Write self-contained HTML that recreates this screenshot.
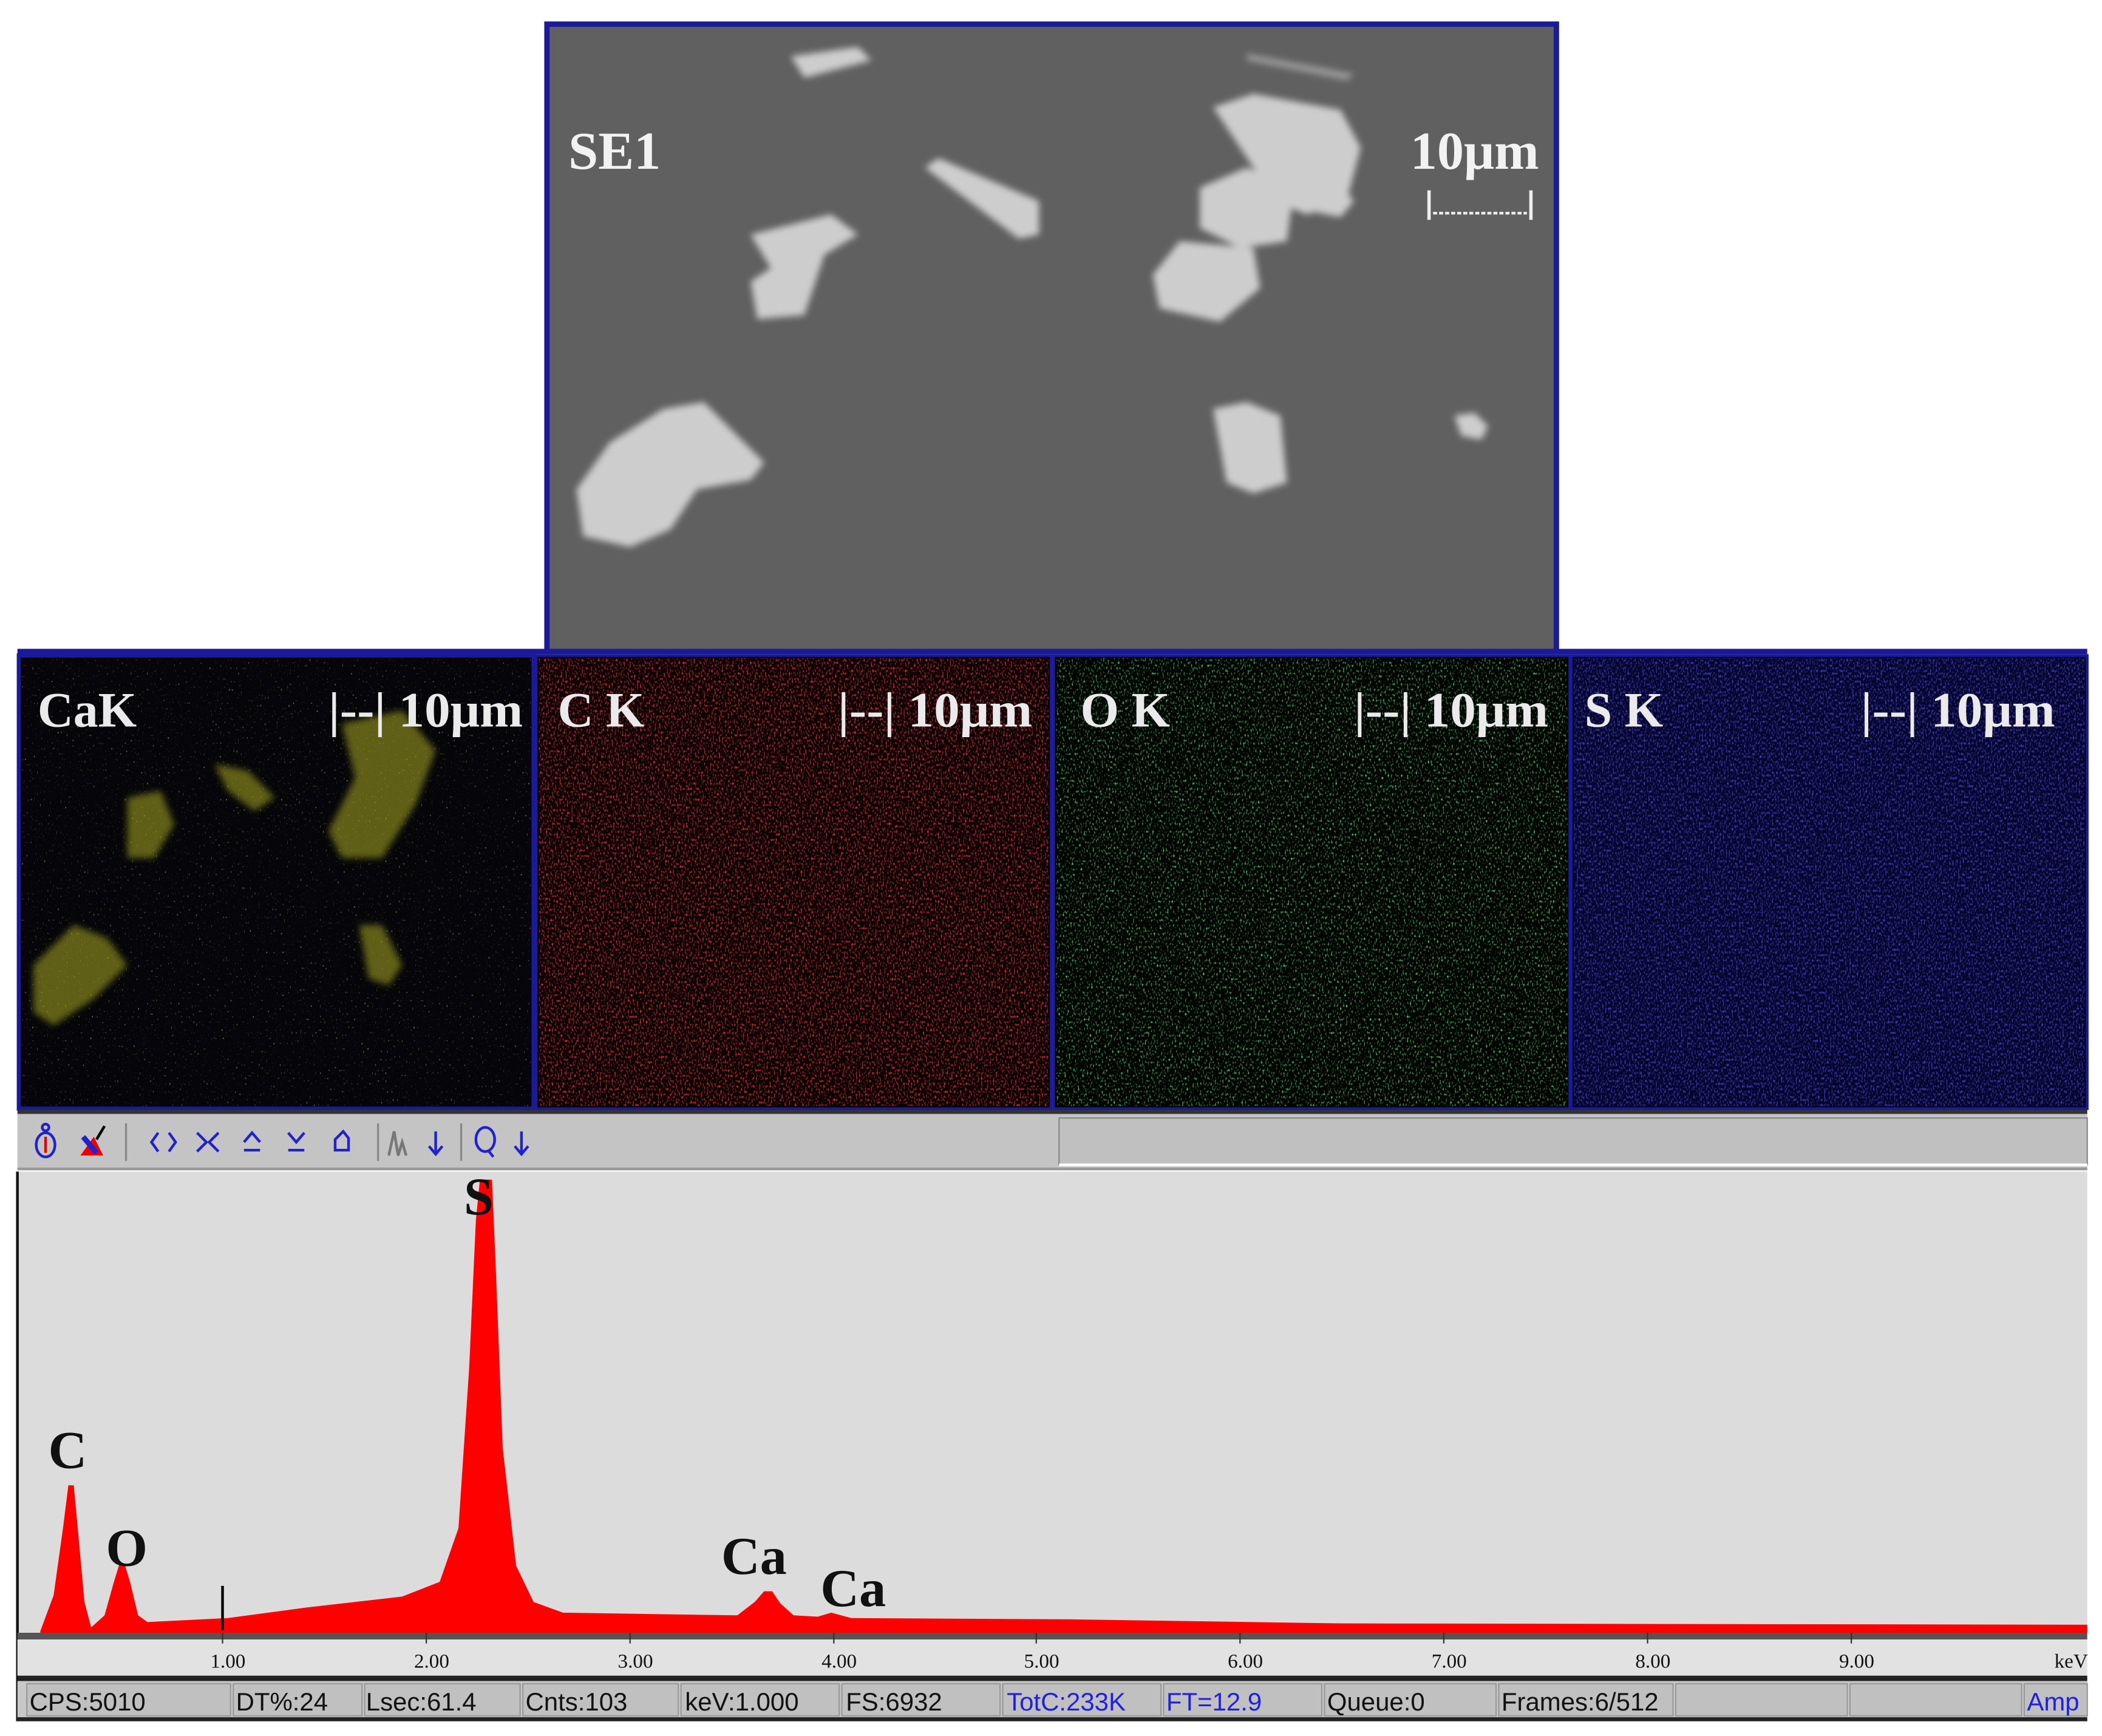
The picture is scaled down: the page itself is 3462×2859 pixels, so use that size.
<!DOCTYPE html>
<html><head><meta charset="utf-8"><style>
html,body{margin:0;padding:0;background:#fff;}
svg{display:block;}
</style></head><body>
<svg width="3462" height="2859" viewBox="0 0 1568 1295" preserveAspectRatio="none" xmlns="http://www.w3.org/2000/svg">
<defs>
<filter id="nR" x="0" y="0" width="100%" height="100%"><feTurbulence type="fractalNoise" baseFrequency="0.9 0.5" numOctaves="1" seed="3"/><feColorMatrix type="matrix" values="0 0 0 0 0.7  0 0 0 0 0.04  0 0 0 0 0.04  3 0 0 0 -1.45"/></filter>
<filter id="nG" x="0" y="0" width="100%" height="100%"><feTurbulence type="fractalNoise" baseFrequency="0.9 0.5" numOctaves="1" seed="7"/><feColorMatrix type="matrix" values="0 0 0 0 0.1  0 0 0 0 0.6  0 0 0 0 0.15  4 0 0 0 -2.2"/></filter>
<filter id="nB" x="0" y="0" width="100%" height="100%"><feTurbulence type="fractalNoise" baseFrequency="0.9 0.5" numOctaves="1" seed="11"/><feColorMatrix type="matrix" values="0 0 0 0 0.05  0 0 0 0 0.05  0 0 0 0 0.5  3 0 0 0 -1.4"/></filter>
<filter id="nY" x="0" y="0" width="100%" height="100%"><feTurbulence type="fractalNoise" baseFrequency="0.9 0.5" numOctaves="1" seed="5"/><feColorMatrix type="matrix" values="0 0 0 0 0.6  0 0 0 0 0.6  0 0 0 0 0.05  4 0 0 0 -2.7"/></filter>
<filter id="bl" x="-20%" y="-20%" width="140%" height="140%"><feGaussianBlur stdDeviation="2.5"/></filter>
</defs>

<!-- SEM image -->
<rect x="406" y="16" width="757" height="470" fill="#1a1a9a"/>
<rect x="410" y="20" width="749" height="464" fill="#606060"/>
<g fill="#cdcdcd" filter="url(#bl)">
<polygon points="590,42 640,35 650,45 600,58"/>
<polygon points="690,125 700,118 775,150 775,175 760,178"/>
<polygon points="560,175 620,160 640,175 615,190 600,235 565,238 560,210 575,200"/>
<polygon points="905,80 935,70 1000,82 1015,110 1005,148 975,160 950,150 935,125"/>
<polygon points="895,140 930,125 965,140 960,180 925,185 895,170"/>
<polygon points="860,205 880,180 935,185 940,215 910,240 865,230"/>
<polygon points="975,140 1000,138 1010,150 1000,162 980,158"/>
<polygon points="430,365 455,330 495,305 525,300 545,320 570,345 560,358 520,365 500,395 470,408 435,400"/>
<polygon points="905,305 930,300 955,310 960,360 935,368 915,360"/>
<polygon points="1085,310 1100,308 1110,318 1105,328 1090,325"/>
<polygon points="930,40 1010,55 1005,60 930,45" fill="#999"/>
</g>
<g font-family="Liberation Serif, serif" font-weight="bold" fill="#f2f2f2">
<text x="424" y="126" font-size="40">SE1</text>
<text x="1052" y="126" font-size="40">10μm</text>
</g>
<path d="M1066,142v22M1142,142v22" stroke="#eee" stroke-width="2.5" fill="none"/>
<path d="M1069,159h70" stroke="#eee" stroke-width="2" stroke-dasharray="3 1.5" fill="none"/>

<!-- map row -->
<rect x="13" y="484" width="1544" height="4" fill="#1a1a9a"/>
<rect x="13" y="488" width="1544" height="340" fill="#888"/>
<g>
<rect x="14" y="489" width="384" height="338" fill="#05050a" stroke="#1a1a9a" stroke-width="3"/>
<rect x="16" y="491" width="380" height="334" filter="url(#nY)"/>
<g fill="#aaaa20" opacity="0.55" filter="url(#bl)">
<polygon points="255,540 300,530 325,560 310,600 285,640 255,640 245,620 265,580"/>
<polygon points="160,570 185,575 205,595 190,605 170,590"/>
<polygon points="95,595 120,590 130,615 115,640 95,640"/>
<polygon points="25,720 55,690 80,700 95,720 70,745 40,765 25,755"/>
<polygon points="268,690 285,690 300,720 290,735 275,730"/>
</g>
<rect x="400" y="489" width="384" height="338" fill="#080000" stroke="#1a1a9a" stroke-width="2"/>
<rect x="402" y="491" width="380" height="334" filter="url(#nR)"/>
<rect x="786" y="489" width="385" height="338" fill="#000500" stroke="#1a1a9a" stroke-width="2"/>
<rect x="788" y="491" width="381" height="334" filter="url(#nG)"/>
<rect x="1172" y="489" width="385" height="338" fill="#04042a" stroke="#1a1a9a" stroke-width="2"/>
<rect x="1174" y="491" width="381" height="334" filter="url(#nB)"/>
</g>
<g font-family="Liberation Serif, serif" font-weight="bold" fill="#eaeaea" font-size="37">
<text x="28" y="542">CaK</text><text x="245" y="542" textLength="145" lengthAdjust="spacingAndGlyphs">|--| 10μm</text>
<text x="416" y="542">C K</text><text x="625" y="542" textLength="145" lengthAdjust="spacingAndGlyphs">|--| 10μm</text>
<text x="806" y="542">O K</text><text x="1010" y="542" textLength="145" lengthAdjust="spacingAndGlyphs">|--| 10μm</text>
<text x="1182" y="542">S K</text><text x="1388" y="542" textLength="145" lengthAdjust="spacingAndGlyphs">|--| 10μm</text>
</g>

<!-- toolbar -->
<rect x="13" y="828" width="1544" height="3" fill="#333"/>
<rect x="13" y="831" width="1544" height="42" fill="#c4c4c4"/>
<rect x="790" y="834" width="767" height="35" fill="#c0c0c0" stroke="#888" stroke-width="1"/>
<line x1="790" y1="869" x2="1557" y2="869" stroke="#fff" stroke-width="2"/>
<line x1="13" y1="872" x2="1557" y2="872" stroke="#999" stroke-width="2"/>
<g fill="none" stroke="#2222cc" stroke-width="2">
<ellipse cx="34" cy="854" rx="7" ry="9"/><circle cx="34" cy="841" r="2.5"/>
<line x1="34" y1="848" x2="34" y2="860" stroke="#e00"/>
<polygon points="60,862 77,862 70,848" fill="#e00" stroke="none"/>
<line x1="62" y1="848" x2="72" y2="860" stroke-width="4"/><line x1="72" y1="850" x2="78" y2="840" stroke="#000"/>
<path d="M118,845l-5,7l5,7M126,845l5,7l-5,7"/>
<path d="M147,845l7,7l-7,7M163,845l-7,7l7,7"/>
<path d="M182,852l6,-7l6,7M182,858h12"/>
<path d="M215,845l6,7l6,-7M215,858h12"/>
<path d="M250,850l6,-6l4,5v9h-10z"/>
<path d="M290,862l4,-18l3,18l3,-10l3,10" stroke="#777"/>
<path d="M325,844v16M320,855l5,6l5,-6"/>
<ellipse cx="362" cy="850" rx="7" ry="9"/><path d="M364,858l4,5"/>
<path d="M389,844v16M384,855l5,6l5,-6"/>
</g>
<g stroke="#888" stroke-width="1.5"><line x1="94" y1="838" x2="94" y2="866"/><line x1="282" y1="838" x2="282" y2="866"/><line x1="344" y1="838" x2="344" y2="866"/></g>

<!-- spectrum -->
<rect x="13" y="874" width="1544" height="346" fill="#dcdcdc"/>
<line x1="13" y1="874" x2="13" y2="1284" stroke="#111" stroke-width="2"/>
<polygon fill="#ff0000" points="30,1217 40,1190 47,1140 51,1108 55,1108 58,1140 63,1195 68,1214 78,1205 85,1180 89,1167 93,1167 97,1180 103,1205 110,1210 170,1207 230,1199 300,1191 328,1180 342,1140 350,1020 355,910 358,880 367,880 370,950 375,1080 385,1168 398,1195 420,1203 550,1205 563,1195 570,1187 576,1187 582,1196 592,1205 610,1206 620,1203 635,1207 800,1208 1000,1211 1557,1212 1557,1218 30,1218"/>
<line x1="166" y1="1183" x2="166" y2="1216" stroke="#000" stroke-width="2"/>
<g font-family="Liberation Serif, serif" font-weight="bold" fill="#111" font-size="40">
<text x="36" y="1095">C</text><text x="79" y="1168">O</text><text x="346" y="906">S</text>
<text x="538" y="1174">Ca</text><text x="612" y="1198">Ca</text>
</g>
<rect x="13" y="1218" width="1544" height="5" fill="#555"/>
<rect x="13" y="1223" width="1544" height="27" fill="#e2e2e2"/>
<g stroke="#333" stroke-width="1"><line x1="166" y1="1218" x2="166" y2="1226"/><line x1="318" y1="1218" x2="318" y2="1226"/><line x1="470" y1="1218" x2="470" y2="1226"/><line x1="622" y1="1218" x2="622" y2="1226"/><line x1="773" y1="1218" x2="773" y2="1226"/><line x1="925" y1="1218" x2="925" y2="1226"/><line x1="1077" y1="1218" x2="1077" y2="1226"/><line x1="1229" y1="1218" x2="1229" y2="1226"/><line x1="1381" y1="1218" x2="1381" y2="1226"/></g>
<g font-family="Liberation Serif, serif" font-size="15" fill="#111" text-anchor="middle">
<text x="170" y="1244">1.00</text><text x="322" y="1244">2.00</text><text x="474" y="1244">3.00</text><text x="626" y="1244">4.00</text><text x="777" y="1244">5.00</text><text x="929" y="1244">6.00</text><text x="1081" y="1244">7.00</text><text x="1233" y="1244">8.00</text><text x="1385" y="1244">9.00</text><text x="1545" y="1244">keV</text>
</g>
<!-- status -->
<rect x="13" y="1250" width="1544" height="4" fill="#222"/>
<rect x="13" y="1254" width="1544" height="30" fill="#c8c8c8"/>
<rect x="13" y="1281" width="1544" height="3" fill="#222"/>
<g fill="#c0c0c0" stroke="#999" stroke-width="1">
<rect x="20" y="1256" width="152" height="24"/><rect x="174" y="1256" width="96" height="24"/><rect x="272" y="1256" width="116" height="24"/><rect x="390" y="1256" width="116" height="24"/><rect x="508" y="1256" width="118" height="24"/><rect x="628" y="1256" width="118" height="24"/><rect x="748" y="1256" width="118" height="24"/><rect x="868" y="1256" width="118" height="24"/><rect x="988" y="1256" width="128" height="24"/><rect x="1118" y="1256" width="130" height="24"/><rect x="1250" y="1256" width="128" height="24"/><rect x="1380" y="1256" width="128" height="24"/><rect x="1510" y="1256" width="47" height="24"/>
</g>
<g font-family="Liberation Sans, sans-serif" font-size="19" fill="#111">
<text x="22" y="1276">CPS:5010</text><text x="176" y="1276">DT%:24</text><text x="273" y="1276">Lsec:61.4</text><text x="392" y="1276">Cnts:103</text><text x="511" y="1276">keV:1.000</text><text x="631" y="1276">FS:6932</text>
<text x="751" y="1276" fill="#2020e0">TotC:233K</text><text x="870" y="1276" fill="#2020e0">FT=12.9</text>
<text x="990" y="1276">Queue:0</text><text x="1120" y="1276">Frames:6/512</text><text x="1512" y="1276" fill="#2020e0">Amp</text>
</g>
</svg>
</body></html>
